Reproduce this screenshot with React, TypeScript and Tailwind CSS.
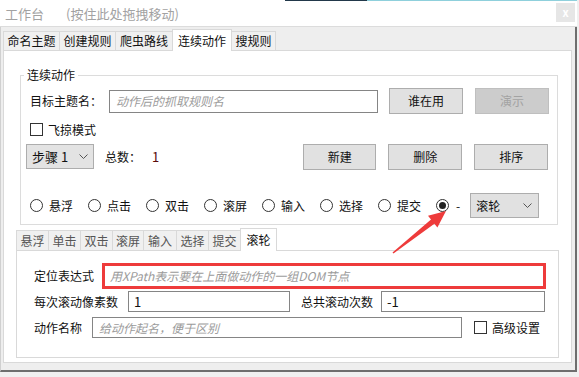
import React from "react";

function Chevron() {
  return (
    <svg width="9" height="5" viewBox="0 0 9 5" className="block">
      <path d="M0.5 0.5 L4.5 4.5 L8.5 0.5" fill="none" stroke="#555" strokeWidth="1" />
    </svg>
  );
}

function RadioCircle({ checked }: { checked?: boolean }) {
  return (
    <div className="w-[13px] h-[13px] rounded-full border border-[#333] bg-white flex items-center justify-center shrink-0">
      {checked ? <div className="w-[7px] h-[7px] rounded-full bg-[#222]" /> : null}
    </div>
  );
}

function Btn({ label, disabled, w = "w-[74px]" }: { label: string; disabled?: boolean; w?: string }) {
  return (
    <div
      className={
        disabled
          ? `${w} h-[26px] shrink-0 border border-[#bfbfbf] bg-[#cccccc] text-[#a3a3a3] flex items-center justify-center`
          : `${w} h-[26px] shrink-0 border border-[#adadad] bg-[#e1e1e1] text-[#111] flex items-center justify-center`
      }
    >
      {label}
    </div>
  );
}

function Box({ children, cls }: { children?: React.ReactNode; cls: string }) {
  return <div className={`shrink-0 bg-white flex items-center ${cls}`}>{children}</div>;
}

export default function App() {
  const mainTabs = [
    { t: "命名主题", w: "w-[57px]" },
    { t: "创建规则", w: "w-[57px]" },
    { t: "爬虫路线", w: "w-[58px]" },
    { t: "连续动作", w: "w-[60px]", sel: true },
    { t: "搜规则", w: "w-[45px]" },
  ];
  const subTabs = [
    { t: "悬浮", w: "w-[33px]" },
    { t: "单击", w: "w-[33px]" },
    { t: "双击", w: "w-[33px]" },
    { t: "滚屏", w: "w-[32px]" },
    { t: "输入", w: "w-[34px]" },
    { t: "选择", w: "w-[33px]" },
    { t: "提交", w: "w-[33px]" },
    { t: "滚轮", w: "w-[37px]", sel: true },
  ];
  const radios = ["悬浮", "点击", "双击", "滚屏", "输入", "选择", "提交"];

  return (
    <div className="w-[579px] h-[377px] bg-[#f0f0f0] relative overflow-hidden font-['Noto_Sans_CJK_SC',sans-serif] text-[12px] leading-[16px] text-[#111]">
      <div className="w-[577px] h-[372px] flex flex-col">
        {/* top strip */}
        <div className="h-[1px] flex shrink-0">
          <div className="w-[285px] bg-white" />
          <div className="w-[82px] bg-[#22384a]" />
          <div className="flex-1 bg-[#8fd0dc]" />
        </div>
        {/* title bar */}
        <div className="h-[26px] shrink-0 bg-white border-b border-[#dcdcdc] flex items-start">
          <span className="ml-[5px] mt-[4px] text-[#a2a2a2] text-[13px] leading-[17px]">工作台</span>
          <span className="ml-[22px] mt-[4px] text-[#a2a2a2] text-[13px] leading-[17px]">(按住此处拖拽移动)</span>
          <div className="ml-auto mr-[2px] mt-[2px] w-[19px] h-[19px] bg-[#e6e6e6] flex items-center justify-center text-white text-[11px] font-bold leading-none">
            x
          </div>
        </div>
        {/* body */}
        <div className="h-[345px] shrink-0 bg-[#eeeeee] border-l border-[#d0d0d0] border-r-2 border-b-2 border-r-[#6e6e6e] border-b-[#6e6e6e] pl-[2px] pr-[3px] pb-[7px] flex flex-col">
          {/* main tabs */}
          <div className="h-[23px] shrink-0 flex items-end">
            {mainTabs.map((t, i) => (
              <div
                key={t.t}
                className={
                  t.sel
                    ? `${t.w} h-[22px] mb-[-1px] relative z-10 bg-white border border-b-0 border-[#d9d9d9] flex items-center justify-center -ml-px`
                    : `${t.w} h-[19px] bg-[#f0f0f0] border border-b-0 border-[#d9d9d9] flex items-center justify-center ${i > 0 ? "-ml-px" : ""}`
                }
              >
                {t.t}
              </div>
            ))}
          </div>
          {/* content panel */}
          <div className="flex-1 bg-white border border-[#d9d9d9] flex flex-col">
            <fieldset className="ml-[16px] mt-[16px] w-[538px] border border-[#dcdcdc] pb-[6px]">
              <legend className="ml-[3px] px-[3px] leading-[16px]">连续动作</legend>
              {/* row 1 */}
              <div className="mt-[5px] h-[26px] flex items-center pl-[9px]">
                <span className="w-[79px] shrink-0">目标主题名：</span>
                <Box cls="w-[269px] h-[23px] border border-[#858585] pl-[6px]">
                  <span className="italic text-[#9b9b9b]">动作后的抓取规则名</span>
                </Box>
                <div className="ml-[11px]"><Btn label="谁在用" /></div>
                <div className="ml-[12px]"><Btn label="演示" disabled /></div>
              </div>
              {/* row 2 */}
              <div className="mt-[9px] h-[13px] flex items-center pl-[9px]">
                <div className="w-[13px] h-[13px] border border-[#333] bg-white shrink-0" />
                <span className="ml-[5px]">飞掠模式</span>
              </div>
              {/* row 3 */}
              <div className="mt-[8px] h-[25px] flex items-center pl-[5px]">
                <div className="w-[68px] h-[25px] shrink-0 border border-[#adadad] bg-[#e3e3e3] flex items-center pl-[5px] pr-[5px]">
                  <span className="text-[13px]">步骤 1</span>
                  <div className="ml-auto"><Chevron /></div>
                </div>
                <span className="ml-[11px] w-[47px] shrink-0">总数：</span>
                <span className="text-[#5a0a0a] text-[13px]">1</span>
                <div className="ml-[144px]"><Btn label="新建" w="w-[73px]" /></div>
                <div className="ml-[12px]"><Btn label="删除" /></div>
                <div className="ml-[12px]"><Btn label="排序" /></div>
              </div>
              {/* row 4 radios */}
              <div className="mt-[24px] h-[25px] flex items-center pl-[9px]">
                {radios.map((r) => (
                  <div key={r} className="w-[58px] shrink-0 flex items-center">
                    <RadioCircle />
                    <span className="ml-[6px]">{r}</span>
                  </div>
                ))}
                <RadioCircle checked />
                <span className="ml-[7px]">-</span>
                <div className="ml-[10px] w-[69px] h-[25px] shrink-0 border border-[#adadad] bg-[#e1e1e1] flex items-center pl-[5px] pr-[6px]">
                  <span>滚轮</span>
                  <div className="ml-auto"><Chevron /></div>
                </div>
              </div>
            </fieldset>
            {/* sub tabs */}
            <div className="ml-[12px] mt-[3px] h-[22px] shrink-0 flex items-end">
              {subTabs.map((t, i) => (
                <div
                  key={t.t}
                  className={
                    t.sel
                      ? `${t.w} h-[23px] mb-[-1px] relative z-10 bg-white border border-b-0 border-[#d9d9d9] flex items-center justify-center -ml-px text-[#111]`
                      : `${t.w} h-[20px] bg-[#f0f0f0] border border-b-0 border-[#d9d9d9] flex items-center justify-center text-[#555] ${i > 0 ? "-ml-px" : ""}`
                  }
                >
                  {t.t}
                </div>
              ))}
            </div>
            {/* sub panel */}
            <div className="ml-[12px] w-[543px] h-[108px] shrink-0 border border-[#d9d9d9] flex flex-col">
              <div className="mt-[12px] h-[26px] flex items-center pl-[17px]">
                <span className="w-[68px] shrink-0">定位表达式</span>
                <Box cls="w-[444px] h-[26px] border-[3px] border-[#ee3b3b] pl-[5px]">
                  <span className="italic text-[#9b9b9b]">用XPath表示要在上面做动作的一组DOM节点</span>
                </Box>
              </div>
              <div className="mt-[2px] h-[21px] flex items-center pl-[17px]">
                <span className="w-[94px] shrink-0">每次滚动像素数</span>
                <Box cls="w-[162px] h-[21px] border border-[#858585] pl-[5px]">
                  <span className="text-[13px]">1</span>
                </Box>
                <span className="ml-[11px] w-[80px] shrink-0">总共滚动次数</span>
                <Box cls="w-[164px] h-[21px] border border-[#858585] pl-[5px]">
                  <span className="text-[13px]">-1</span>
                </Box>
              </div>
              <div className="mt-[5px] h-[21px] flex items-center pl-[17px]">
                <span className="w-[58px] shrink-0">动作名称</span>
                <Box cls="w-[370px] h-[21px] border border-[#858585] pl-[6px]">
                  <span className="italic text-[#9b9b9b]">给动作起名，便于区别</span>
                </Box>
                <div className="ml-[12px] w-[13px] h-[13px] border border-[#333] bg-white shrink-0" />
                <span className="ml-[5px]">高级设置</span>
              </div>
            </div>
          </div>
        </div>
      </div>
      {/* annotation arrow */}
      <svg className="absolute left-0 top-0 pointer-events-none" width="579" height="377" viewBox="0 0 579 377">
        <polygon
          points="392.5,252.4 431,219.4 428,215.7 446,211 437.4,227.5 434.4,223.8 393.5,253.6"
          fill="#ee3b3b"
        />
      </svg>
    </div>
  );
}
